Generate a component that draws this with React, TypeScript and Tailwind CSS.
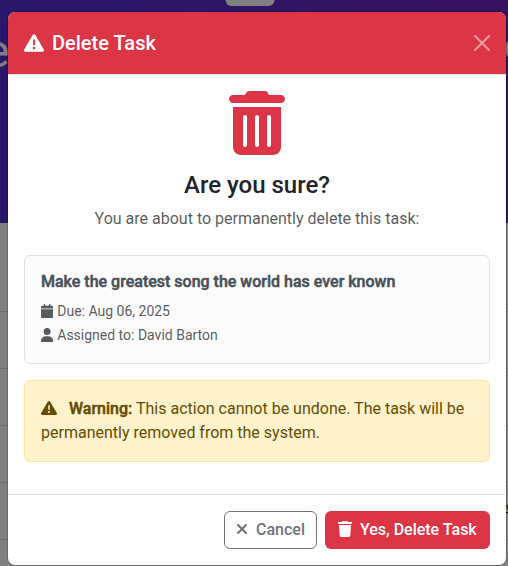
import {
  FaCalendar,
  FaTrash,
  FaTrashCan,
  FaTriangleExclamation,
  FaUser,
  FaXmark,
} from "react-icons/fa6";

const ROW_LINES = [0, 1, 2, 3, 4];

// Dimmed page behind the dialog
function Backdrop() {
  return (
    <div className="absolute inset-0 flex flex-col overflow-hidden bg-[#808080]">
      <div className="relative h-[223px] shrink-0 bg-gradient-to-r from-[#29176b] to-[#37125f]">
        <div className="mx-auto h-1.5 w-[49px] -translate-x-[4.5px] rounded-b-md bg-[#808080]" />
        <span className="absolute -left-[15px] top-[26px] text-[46px] leading-[50px] text-[#808080]">e</span>
        <span className="absolute left-[506px] top-[41px] h-4 w-3 rounded-l bg-[#808080]" />
      </div>
      <div className="h-8 shrink-0" />
      {ROW_LINES.map((line) => (
        <div key={line} className="h-[57px] shrink-0 border-b border-[#707070]" />
      ))}
      <span className="absolute left-[506px] top-[502px] h-[11px] w-2 border-b border-black text-[11px] leading-[11px] text-black">
        v
      </span>
    </div>
  );
}

export default function App() {
  return (
    <div className="relative h-[566px] w-[508px] overflow-hidden font-[Roboto,sans-serif] text-base text-[#212529]">
      <Backdrop />
      <div className="relative ml-[7px] flex w-[500px] pt-[11px]">
        <div
          role="dialog"
          className="flex w-full flex-col rounded-lg border border-black/[0.175] bg-white bg-clip-padding"
        >
          <header className="flex h-[63px] items-center justify-between rounded-t-[7px] border-b border-[#dee2e6] bg-[#dc3545] px-4 text-white">
            <h5 className="flex items-center text-xl font-medium leading-[30px]">
              <FaTriangleExclamation className="mr-2 mb-px size-5" />
              Delete Task
            </h5>
            <button aria-label="Close" className="opacity-50">
              <svg viewBox="0 0 16 16" className="size-4" fill="currentColor">
                <path d="M.293.293a1 1 0 0 1 1.414 0L8 6.586 14.293.293a1 1 0 1 1 1.414 1.414L9.414 8l6.293 6.293a1 1 0 0 1-1.414 1.414L8 9.414l-6.293 6.293a1 1 0 0 1-1.414-1.414L6.586 8 .293 1.707a1 1 0 0 1 0-1.414" />
              </svg>
            </button>
          </header>

          <main className="p-4">
            <div className="mb-6 flex flex-col items-center">
              <FaTrashCan className="mb-4 h-16 w-14 text-[#dc3545]" />
              <h4 className="mb-2 text-2xl font-medium leading-[28px]">Are you sure?</h4>
              <p className="leading-6 text-[#212529]/75">You are about to permanently delete this task:</p>
            </div>

            <section className="mb-4 h-[109px] rounded-md border border-[#dee2e6] bg-[#fcfcfd] p-4">
              <h6 className="mb-2 font-medium leading-[19px] text-[#495057] [-webkit-text-stroke:0.5px_#495057]">
                Make the greatest song the world has ever known
              </h6>
              <div className="flex h-6 items-center text-sm text-[#212529]/75">
                <FaCalendar className="mr-1 h-3.5 w-[12.25px]" />
                Due: Aug 06, 2025
              </div>
              <div className="flex h-6 items-center text-sm text-[#212529]/75">
                <FaUser className="mr-1 h-3.5 w-[12.25px]" />
                Assigned to: David Barton
              </div>
            </section>

            <section className="mb-4 rounded-md border border-[#ffe69c] bg-[#fff3cd] p-4 leading-6 text-[#664d03]">
              <FaTriangleExclamation className="mr-3 inline-block size-4 align-[-2px]" />
              <strong className="font-medium [-webkit-text-stroke:0.5px_#664d03]">Warning:</strong> This action
              cannot be undone. The task will be permanently removed from the system.
            </section>
          </main>

          <footer className="flex justify-end gap-2 border-t border-[#dee2e6] p-4">
            <button className="flex h-[38px] w-[93px] items-center rounded-md border border-[#6c757d] pl-[11px] font-medium text-[#6c757d]">
              <FaXmark className="mr-2 mb-0.5 h-4 w-3" />
              Cancel
            </button>
            <button className="flex h-[38px] w-[165px] items-center rounded-md bg-[#dc3545] pl-[13px] font-medium text-white">
              <FaTrash className="mr-2 mb-0.5 h-4 w-3.5" />
              Yes, Delete Task
            </button>
          </footer>
        </div>
      </div>
    </div>
  );
}
